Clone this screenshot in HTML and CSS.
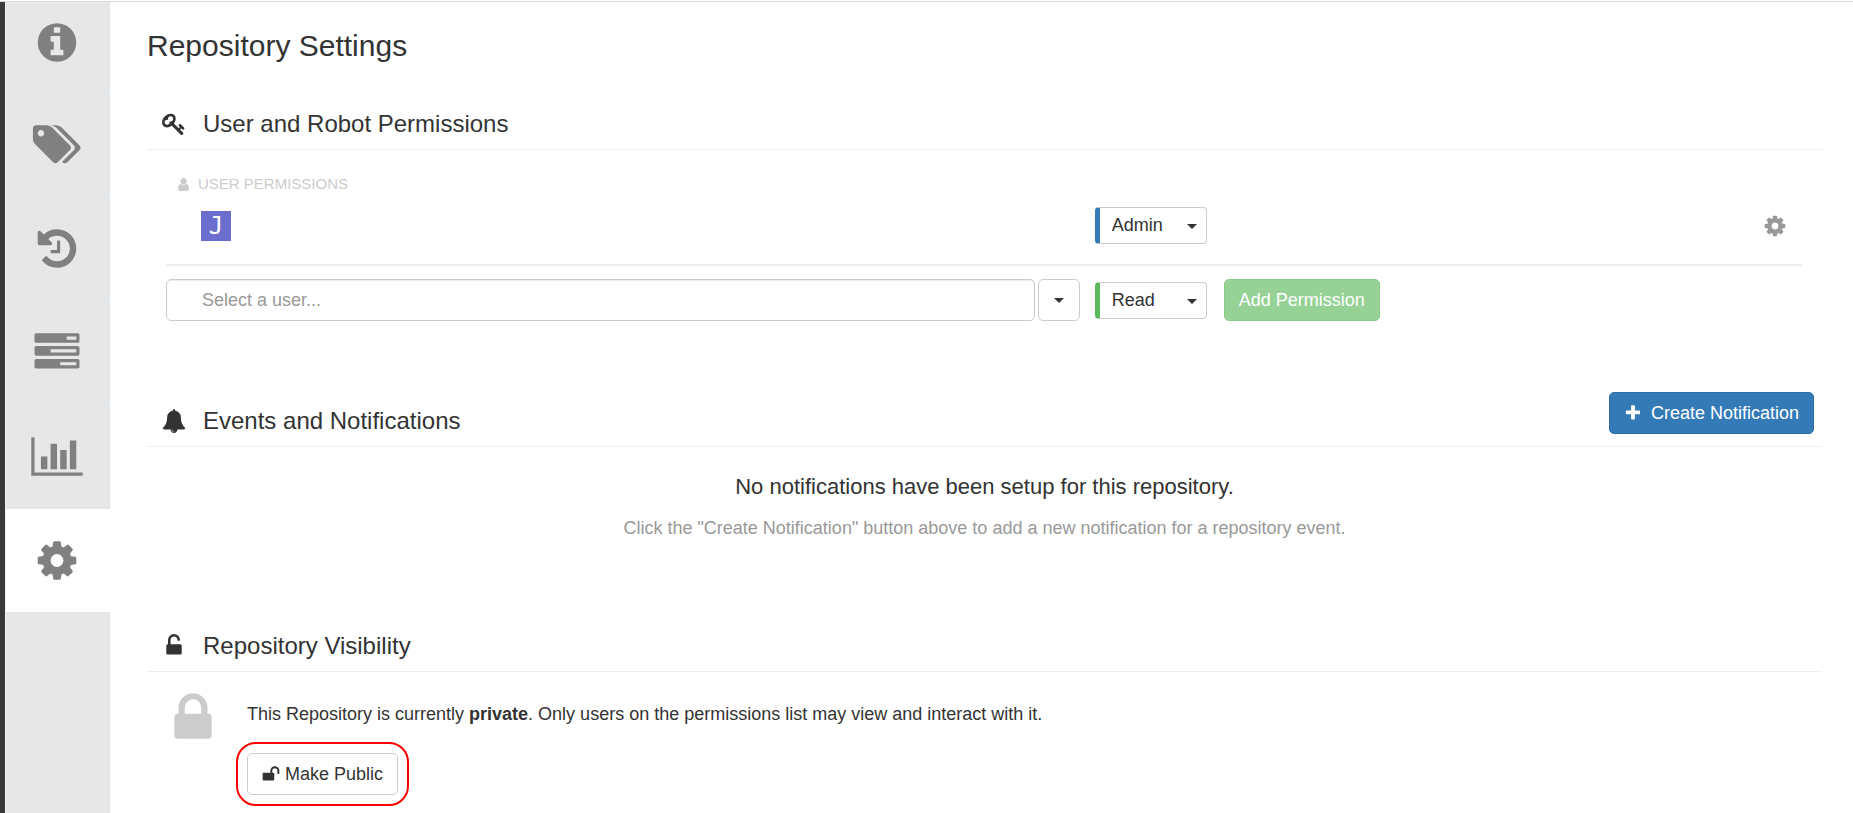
FILE: index.html
```html
<!DOCTYPE html>
<html lang="en">
<head>
<meta charset="utf-8">
<title>Repository Settings</title>
<link rel="stylesheet" href="styles.css">
</head>
<body>
<svg class="sprite" aria-hidden="true">
  <symbol id="info" viewBox="0 0 1792 1792"><path d="M1152 1376v-160q0-14-9-23t-23-9h-96v-512q0-14-9-23t-23-9h-320q-14 0-23 9t-9 23v160q0 14 9 23t23 9h96v320h-96q-14 0-23 9t-9 23v160q0 14 9 23t23 9h448q14 0 23-9t9-23zm-128-896v-160q0-14-9-23t-23-9h-192q-14 0-23 9t-9 23v160q0 14 9 23t23 9h192q14 0 23-9t9-23zm640 416q0 209-103 385.5t-279.5 279.5-385.5 103-385.5-103-279.5-279.5-103-385.5 103-385.5 279.5-279.5 385.5-103 385.5 103 279.5 279.5 103 385.5z"/></symbol>
  <symbol id="tags" viewBox="0 0 1920 1792"><path d="M448 448q0-53-37.5-90.5t-90.5-37.5-90.5 37.5-37.5 90.5 37.5 90.5 90.5 37.5 90.5-37.5 37.5-90.5zm1067 576q0 53-37 90l-491 492q-39 37-91 37-53 0-90-37l-715-716q-38-37-64.5-101t-26.5-117v-416q0-52 38-90t90-38h416q53 0 117 26.5t102 64.5l715 714q37 39 37 91zm384 0q0 53-37 90l-491 492q-39 37-91 37-36 0-59-14t-53-45l470-470q37-37 37-90 0-52-37-91l-715-714q-38-38-102-64.5t-117-26.5h224q53 0 117 26.5t102 64.5l715 714q37 39 37 91z"/></symbol>
  <symbol id="history" viewBox="0 0 1792 1792"><path d="M1664 896q0 156-61 298t-164 245-245 164-298 61q-172 0-327-72.5t-264-204.5q-7-10-6.5-22.5t8.5-20.5l137-138q10-9 25-9 16 2 23 12 73 95 179 147t225 52q104 0 198.5-40.5t163.5-109.5 109.5-163.5 40.5-198.5-40.5-198.5-109.5-163.5-163.5-109.5-198.5-40.5q-98 0-188 35.5t-160 101.5l137 138q31 30 14 69-17 40-59 40h-448q-26 0-45-19t-19-45v-448q0-42 40-59 39-17 69 14l130 129q107-101 244.5-156.5t284.5-55.5q156 0 298 61t245 164 164 245 61 298zm-640-288v448q0 14-9 23t-23 9h-320q-14 0-23-9t-9-23v-64q0-14 9-23t23-9h224v-352q0-14 9-23t23-9h64q14 0 23 9t9 23z"/></symbol>
  <symbol id="tasks" viewBox="0 0 1792 1792"><path d="M1024 1408h640v-128h-640v128zm-384-512h1024v-128h-1024v128zm640-512h384v-128h-384v128zm512 832v256q0 26-19 45t-45 19h-1664q-26 0-45-19t-19-45v-256q0-26 19-45t45-19h1664q26 0 45 19t19 45zm0-512v256q0 26-19 45t-45 19h-1664q-26 0-45-19t-19-45v-256q0-26 19-45t45-19h1664q26 0 45 19t19 45zm0-512v256q0 26-19 45t-45 19h-1664q-26 0-45-19t-19-45v-256q0-26 19-45t45-19h1664q26 0 45 19t19 45z"/></symbol>
  <symbol id="chart" viewBox="0 0 2048 1792"><path d="M640 896v512h-256v-512h256zm384-512v1024h-256v-1024h256zm1024 1152v128h-2048v-1536h128v1408h1920zm-640-896v768h-256v-768h256zm384-384v1152h-256v-1152h256z"/></symbol>
  <symbol id="cog" viewBox="0 0 1792 1792"><path d="M1152 896q0-106-75-181t-181-75-181 75-75 181 75 181 181 75 181-75 75-181zm512-109v222q0 12-8 23t-20 13l-185 28q-19 54-39 91 35 50 107 138 10 12 10 25t-9 23q-27 37-99 108t-94 71q-12 0-26-9l-138-108q-44 23-91 38-16 136-29 186-7 28-36 28h-222q-14 0-24.5-8.5t-11.5-21.5l-28-184q-49-16-90-37l-141 107q-10 9-25 9-14 0-25-11-126-114-165-168-7-10-7-23 0-12 8-23 15-21 51-66.5t54-70.5q-27-50-41-99l-183-27q-13-2-21-12.5t-8-23.5v-222q0-12 8-23t19-13l186-28q14-46 39-92-40-57-107-138-10-12-10-24 0-10 9-23 26-36 98.5-107.5t94.5-71.5q13 0 26 10l138 107q44-23 91-38 16-136 29-186 7-28 36-28h222q14 0 24.5 8.5t11.5 21.5l28 184q49 16 90 37l142-107q9-9 24-9 13 0 25 10 129 119 165 170 7 8 7 22 0 12-8 23-15 21-51 66.5t-54 70.5q26 50 41 98l183 28q13 2 21 12.5t8 23.5z"/></symbol>
  <symbol id="key" viewBox="0 0 1792 1792"><path d="M832 512q0-80-56-136t-136-56-136 56-56 136q0 42 19 83-41-19-83-19-80 0-136 56t-56 136 56 136 136 56 136-56 56-136q0-42-19-83 41 19 83 19 80 0 136-56t56-136zm851 704q0 17-49 66t-66 49q-9 0-28.5-16t-36.5-33-38.5-40-24.5-26l-96 96 220 220q28 28 28 68 0 42-39 81t-81 39q-40 0-68-28l-671-671q-176 131-365 131-163 0-265.5-102.5t-102.5-265.5q0-160 95-313t248-248 313-95q163 0 265.5 102.5t102.5 265.5q0 189-131 365l355 355 96-96q-3-3-26-24.5t-40-38.5-33-36.5-16-28.5q0-17 49-66t66-49q13 0 23 10 6 6 46 44.5t82 79.5 86.5 86 73 78 28.5 41z"/></symbol>
  <symbol id="user" viewBox="0 0 1792 1792"><path d="M1536 1399q0 109-62.5 187t-150.5 78h-854q-88 0-150.5-78t-62.5-187q0-85 8.5-160.5t31.5-152 58.5-131 94-89 134.5-34.5q131 128 313 128t313-128q76 0 134.5 34.5t94 89 58.5 131 31.5 152 8.5 160.5zm-256-887q0 159-112.5 271.5t-271.5 112.5-271.5-112.5-112.5-271.5 112.5-271.5 271.5-112.5 271.5 112.5 112.5 271.5z"/></symbol>
  <symbol id="bell" viewBox="0 0 1792 1792"><path d="M912 1696q0-16-16-16-59 0-101.5-42.5t-42.5-101.5q0-16-16-16t-16 16q0 73 51.5 124.5t124.5 51.5q16 0 16-16zm816-288q0 52-38 90t-90 38h-448q0 106-75 181t-181 75-181-75-75-181h-448q-52 0-90-38t-38-90q50-42 91-88t85-119.5 74.5-158.5 50-206 19.5-260q0-152 117-282.5t307-158.5q-8-19-8-39 0-40 28-68t68-28 68 28 28 68q0 20-8 39 190 28 307 158.5t117 282.5q0 139 19.5 260t50 206 74.5 158.5 85 119.5 91 88z"/></symbol>
  <symbol id="lock" viewBox="0 0 1792 1792"><path d="M640 768h512v-192q0-106-75-181t-181-75-181 75-75 181v192zm832 96v576q0 40-28 68t-68 28h-960q-40 0-68-28t-28-68v-576q0-40 28-68t68-28h32v-192q0-184 132-316t316-132 316 132 132 316v192h32q40 0 68 28t28 68z"/></symbol>
  <symbol id="unlock-alt" viewBox="0 0 1792 1792"><path d="M1376 768q40 0 68 28t28 68v576q0 40-28 68t-68 28h-960q-40 0-68-28t-28-68v-576q0-40 28-68t68-28h32v-320q0-185 131.5-316.5t316.5-131.5 316.5 131.5 131.5 316.5q0 26-19 45t-45 19h-64q-26 0-45-19t-19-45q0-106-75-181t-181-75-181 75-75 181v320h736z"/></symbol>
  <symbol id="unlock" viewBox="0 0 1792 1792"><path d="M1728 576v256q0 26-19 45t-45 19h-64q-26 0-45-19t-19-45v-256q0-106-75-181t-181-75-181 75-75 181v192h96q40 0 68 28t28 68v576q0 40-28 68t-68 28h-960q-40 0-68-28t-28-68v-576q0-40 28-68t68-28h672v-192q0-185 131.5-316.5t316.5-131.5 316.5 131.5 131.5 316.5z"/></symbol>
  <symbol id="plus" viewBox="0 0 1792 1792"><path d="M1600 736v192q0 40-28 68t-68 28h-416v416q0 40-28 68t-68 28h-192q-40 0-68-28t-28-68v-416h-416q-40 0-68-28t-28-68v-192q0-40 28-68t68-28h416v-416q0-40 28-68t68-28h192q40 0 68 28t28 68v416h416q40 0 68 28t28 68z"/></symbol>
</svg>

<div class="page">
  <nav class="tabs" aria-label="Repository">
    <a class="tab" href="#info-tab" aria-label="Information"><svg class="tab-icon"><use href="#info"/></svg></a>
    <a class="tab" href="#tags-tab" aria-label="Tags"><svg class="tab-icon"><use href="#tags"/></svg></a>
    <a class="tab" href="#history-tab" aria-label="Tag History"><svg class="tab-icon"><use href="#history"/></svg></a>
    <a class="tab" href="#builds-tab" aria-label="Builds"><svg class="tab-icon"><use href="#tasks"/></svg></a>
    <a class="tab" href="#usage-tab" aria-label="Usage Logs"><svg class="tab-icon"><use href="#chart"/></svg></a>
    <a class="tab tab-active" href="#settings-tab" aria-label="Settings" aria-current="page"><svg class="tab-icon"><use href="#cog"/></svg></a>
  </nav>

  <main class="content">
    <h1 class="title">Repository Settings</h1>

    <section class="panel permissions">
      <header class="panel-head">
        <svg class="head-icon"><use href="#key"/></svg>
        <h2 class="panel-title">User and Robot Permissions</h2>
      </header>
      <div class="panel-body">
        <h3 class="group"><svg class="group-icon"><use href="#user"/></svg>User Permissions</h3>
        <div class="row row-user">
          <div class="entity"><span class="avatar">J</span></div>
          <div class="role-cell">
            <span class="role role-admin"><select class="role-select" aria-label="Role of this user"><option>Admin</option><option>Write</option><option>Read</option></select></span>
          </div>
          <button class="row-menu" type="button" aria-label="Options"><svg class="menu-icon"><use href="#cog"/></svg></button>
        </div>
        <form class="row row-add">
          <div class="picker">
            <input class="picker-input" type="text" placeholder="Select a user..." aria-label="Select a user">
            <button class="picker-toggle" type="button" aria-label="Show users"><span class="caret"></span></button>
          </div>
          <div class="role-cell">
            <span class="role role-read"><select class="role-select" aria-label="Role of the new user"><option>Read</option><option>Write</option><option>Admin</option></select></span>
            <button class="btn btn-success" type="button" disabled>Add Permission</button>
          </div>
        </form>
      </div>
    </section>

    <section class="panel events">
      <header class="panel-head">
        <svg class="head-icon"><use href="#bell"/></svg>
        <h2 class="panel-title">Events and Notifications</h2>
        <button class="btn btn-primary" type="button"><svg class="btn-icon"><use href="#plus"/></svg>Create Notification</button>
      </header>
      <div class="empty">
        <p class="empty-title">No notifications have been setup for this repository.</p>
        <p class="empty-text">Click the "Create Notification" button above to add a new notification for a repository event.</p>
      </div>
    </section>

    <section class="panel">
      <header class="panel-head">
        <svg class="head-icon"><use href="#unlock-alt"/></svg>
        <h2 class="panel-title">Repository Visibility</h2>
      </header>
      <div class="visibility">
        <svg class="lock-icon"><use href="#lock"/></svg>
        <div class="visibility-info">
          <p class="visibility-text">This Repository is currently <b>private</b>. Only users on the permissions list may view and interact with it.</p>
          <div class="highlight">
            <button class="btn btn-default" type="button"><svg class="btn-icon"><use href="#unlock"/></svg>Make Public</button>
          </div>
        </div>
      </div>
    </section>
  </main>
</div>
</body>
</html>
```
FILE: styles.css
```css
* {
  box-sizing: border-box;
}

body {
  margin: 0;
  padding-top: 1px;
  background: #fff;
  color: #333;
  font: 18px/26px "Liberation Sans", Arial, sans-serif;
}

h1, h2, h3, p {
  margin: 0;
  font-weight: normal;
}

button, input, select {
  font: inherit;
  color: inherit;
}

svg {
  display: block;
  flex: none;
  fill: currentColor;
}

.sprite {
  display: none;
}

.page {
  display: flex;
  min-height: calc(100vh - 1px);
  border-top: 1px solid #d8dcdc;
}

.tabs {
  flex: none;
  width: 110px;
  border-left: 5px solid #393939;
  background: #e7e7e7;
  box-shadow: inset 1px 0 #f4f4f4, inset -1px 0 #dde6ee;
}

.tab {
  display: flex;
  align-items: center;
  justify-content: center;
  height: 104px;
  margin-left: 1px;
  padding-right: 2px;
  border-bottom: 1px solid #dde6ee;
  color: #808080;
}

.tab:first-child {
  height: 91px;
  padding-bottom: 10px;
}

.tab-active {
  background: #fff;
}

.tab-icon {
  width: 52px;
  height: 45px;
}

.content {
  flex: 1;
  min-width: 0;
  padding: 25px 31px 0 37px;
}

.title {
  font-size: 30px;
  line-height: 38px;
}

.permissions {
  margin-top: 34px;
}

.panel-head {
  display: flex;
  align-items: center;
  gap: 17px;
  height: 51px;
  padding: 0 8px 1px 15px;
  border-bottom: 1px solid #eee;
}

.head-icon {
  width: 24px;
  height: 24px;
}

.panel-title {
  flex: 1;
  font-size: 24px;
  line-height: 32px;
}

.panel-body {
  padding: 20px 19px 0;
}

.group {
  display: flex;
  align-items: center;
  gap: 7px;
  padding-left: 10px;
  color: #ccc;
  font-size: 15px;
  line-height: 28px;
  text-transform: uppercase;
}

.group-icon {
  width: 15px;
  height: 15px;
}

.row {
  display: grid;
  grid-template-columns: 56% 1fr auto;
  align-items: center;
}

.row-user {
  height: 68px;
  padding-bottom: 12px;
  border-bottom: 2px solid #eee;
}

.row-add {
  padding-top: 13px;
}

.entity {
  padding: 2px 0 0 35px;
}

.avatar {
  display: block;
  width: 30px;
  height: 30px;
  background: #6b6ecf;
  color: #fff;
  font: 24px/30px "DejaVu Sans Mono", monospace;
  text-align: center;
}

.role-cell {
  display: flex;
  align-items: center;
  gap: 17px;
  padding-left: 12px;
}

.role {
  position: relative;
}

.role-select {
  display: block;
  width: 112px;
  height: 37px;
  padding: 0 12px;
  border: 1px solid #ccc;
  border-left-width: 5px;
  border-radius: 4px;
  background: #fff;
  appearance: none;
}

.role-admin .role-select {
  border-left-color: #337ab7;
}

.role-read .role-select {
  border-left-color: #5cb85c;
}

.caret,
.role::after {
  border: 5px solid transparent;
  border-top-color: #333;
  border-bottom: 0;
}

.role::after {
  content: "";
  position: absolute;
  top: 17px;
  right: 10px;
  pointer-events: none;
}

.row-menu {
  padding: 2px 16px 0;
  border: 0;
  background: none;
  color: #999;
}

.menu-icon {
  width: 24px;
  height: 24px;
}

.picker {
  display: flex;
  gap: 3px;
  padding-right: 3px;
}

.picker-input {
  flex: 1;
  min-width: 0;
  height: 42px;
  padding: 0 35px;
  border: 1px solid #ccc;
  border-radius: 5px;
  box-shadow: inset 0 1px 1px rgba(0, 0, 0, 0.08);
}

.picker-input::placeholder {
  color: #999;
  opacity: 1;
}

.picker-toggle {
  display: flex;
  align-items: center;
  justify-content: center;
  width: 42px;
  padding: 0;
  border: 1px solid #ccc;
  border-radius: 5px;
  background: #fff;
}

.btn {
  display: flex;
  align-items: center;
  height: 42px;
  padding: 0 14px;
  border: 1px solid transparent;
  border-radius: 5px;
  white-space: nowrap;
}

.btn-icon {
  width: 18px;
  height: 18px;
}

.btn-success {
  border-color: #8bcd8b;
  background: #96d296;
  color: #fff;
}

.btn-primary {
  gap: 9px;
  margin-bottom: 15px;
  border-color: #2e6da4;
  background: #337ab7;
  color: #fff;
}

.btn-default {
  gap: 5px;
  border-color: #ccc;
  background: #fff;
}

.events {
  margin-top: 75px;
}

.empty {
  padding: 25px 0 80px;
  text-align: center;
}

.empty-title {
  font-size: 22px;
  line-height: 30px;
}

.empty-text {
  margin-top: 13px;
  color: #999;
}

.visibility {
  display: flex;
  gap: 25px;
  padding: 17px 0 0 17px;
}

.lock-icon {
  width: 58px;
  height: 58px;
  color: #ccc;
}

.visibility-text {
  padding-top: 12px;
}

.highlight {
  width: fit-content;
  margin: 15px 0 0 -11px;
  padding: 9px;
  border: 2px solid #f00;
  border-radius: 20px;
}
```
